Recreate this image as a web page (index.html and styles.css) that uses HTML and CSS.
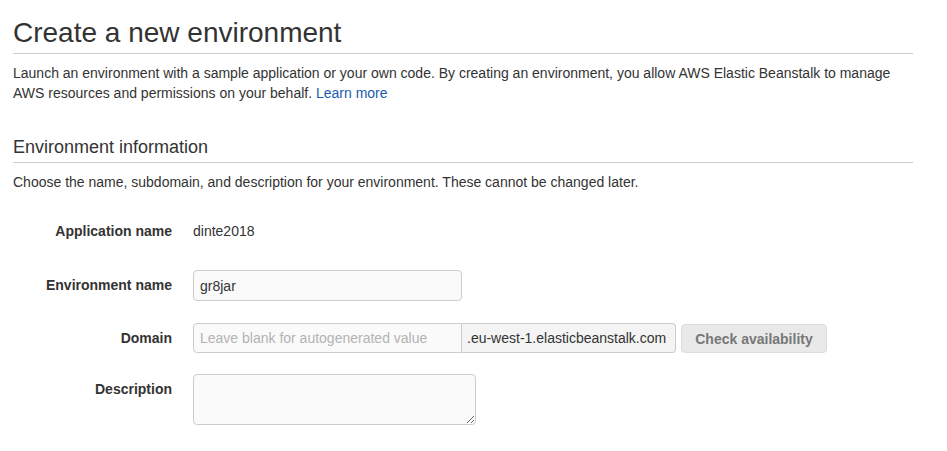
FILE: index.html
```html
<!DOCTYPE html>
<html>
<head>
<meta charset="utf-8">
<link rel="stylesheet" href="styles.css">
</head>
<body>
<div class="page">
  <h1 class="title">Create a new environment</h1>
  <p class="intro">Launch an environment with a sample application or your own code. By creating an environment, you allow AWS Elastic Beanstalk to manage AWS resources and permissions on your behalf. <a class="link" href="#">Learn more</a></p>

  <h2 class="section-title">Environment information</h2>
  <p class="section-desc">Choose the name, subdomain, and description for your environment. These cannot be changed later.</p>

  <div class="form">
    <div class="row row-static">
      <div class="label">Application name</div>
      <div class="value">dinte2018</div>
    </div>
    <div class="row">
      <div class="label">Environment name</div>
      <input class="input" type="text" value="gr8jar">
    </div>
    <div class="row">
      <div class="label">Domain</div>
      <div class="domain-group">
        <input class="input input-left" type="text" placeholder="Leave blank for autogenerated value">
        <span class="addon">.eu-west-1.elasticbeanstalk.com</span>
      </div>
      <button class="btn" type="button">Check availability</button>
    </div>
    <div class="row row-desc">
      <div class="label">Description</div>
      <textarea class="textarea"></textarea>
    </div>
  </div>
</div>
</body>
</html>
```

FILE: styles.css
```css
html, body {
  margin: 0;
  padding: 0;
  background: #ffffff;
}
body {
  font-family: "Liberation Sans", Arial, Helvetica, sans-serif;
  color: #333333;
  font-size: 14px;
}
.page {
  width: 900px;
  padding: 16px 13px 0 13px;
}
.title {
  margin: 0;
  font-size: 28px;
  font-weight: normal;
  line-height: 34px;
  padding-bottom: 3px;
  border-bottom: 1px solid #cccccc;
  color: #333333;
}
.intro {
  margin: 9px 0 0 0;
  line-height: 20px;
}
.link {
  color: #1a5cab;
  text-decoration: none;
}
.section-title {
  margin: 33px 0 0 0;
  font-size: 18px;
  font-weight: normal;
  line-height: 22px;
  padding-bottom: 4px;
  border-bottom: 1px solid #cccccc;
}
.section-desc {
  margin: 9px 0 0 0;
  line-height: 20px;
}
.form {
  margin-top: 23px;
  display: flex;
  flex-direction: column;
}
.row {
  display: flex;
  align-items: flex-start;
  margin-bottom: 22px;
}
.row-static {
  margin-top: 1px;
  margin-bottom: 24px;
}
.row-desc {
  margin-top: -1px;
}
.label {
  width: 159px;
  text-align: right;
  font-weight: bold;
  line-height: 30px;
  margin-right: 21px;
  flex: none;
}
.value {
  line-height: 30px;
}
.input {
  box-sizing: border-box;
  width: 269px;
  height: 31px;
  border: 1px solid #cccccc;
  border-radius: 4px;
  background: #fafafa;
  padding: 0 6px;
  font-family: "Liberation Sans", Arial, sans-serif;
  font-size: 14px;
  color: #333333;
  margin: 0;
  outline: none;
}
.input::placeholder {
  color: #b3b3b3;
}
.domain-group {
  display: flex;
}
.input-left {
  height: 30px;
  border-radius: 4px 0 0 4px;
}
.addon {
  box-sizing: border-box;
  height: 30px;
  width: 214px;
  border: 1px solid #cccccc;
  border-left: none;
  border-radius: 0 4px 4px 0;
  background: #f4f4f4;
  padding: 0 5px;
  line-height: 28px;
  color: #333333;
  white-space: nowrap;
}
.btn {
  box-sizing: border-box;
  margin: 1px 0 0 5px;
  height: 29px;
  width: 146px;
  border: 1px solid #dddddd;
  border-radius: 4px;
  background: #e9e9e9;
  color: #777777;
  font-family: "Liberation Sans", Arial, sans-serif;
  font-size: 14px;
  font-weight: bold;
  padding: 0;
}
.textarea {
  box-sizing: border-box;
  width: 283px;
  height: 51px;
  border: 1px solid #cccccc;
  border-radius: 4px;
  background: #fafafa;
  margin: 0;
  padding: 6px;
  font-family: "Liberation Sans", Arial, sans-serif;
  font-size: 14px;
}
```
